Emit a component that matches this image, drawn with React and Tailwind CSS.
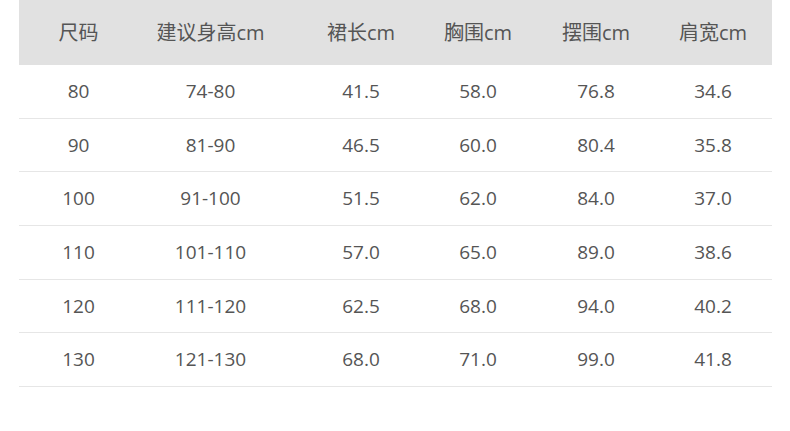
const headers = ["尺码", "建议身高cm", "裙长cm", "胸围cm", "摆围cm", "肩宽cm"];

const rows = [
  ["80", "74-80", "41.5", "58.0", "76.8", "34.6"],
  ["90", "81-90", "46.5", "60.0", "80.4", "35.8"],
  ["100", "91-100", "51.5", "62.0", "84.0", "37.0"],
  ["110", "101-110", "57.0", "65.0", "89.0", "38.6"],
  ["120", "111-120", "62.5", "68.0", "94.0", "40.2"],
  ["130", "121-130", "68.0", "71.0", "99.0", "41.8"],
];

const cols = "grid grid-cols-[119px_145px_156px_78px_158px_76px_1fr]";

export default function App() {
  return (
    <div
      className="w-[790px] h-[431px] bg-white overflow-hidden"
      style={{ fontFamily: '"Open Sans", "Noto Sans CJK SC", sans-serif' }}
    >
      <div className="ml-[19px] w-[753px] text-[19px] text-[#555]">
        {/* HEADER */}
        <div className={`${cols} h-[65px] items-center bg-[#e1e1e1] text-[20px]`}>
          {headers.map((h) => (
            <div key={h} className="text-center whitespace-nowrap">
              {h}
            </div>
          ))}
          <div />
        </div>

        {/* ROWS */}
        {rows.map((r) => (
          <div
            key={r[0]}
            className={`${cols} h-[53.67px] items-center border-b border-[#e6e6e6]`}
          >
            {r.map((v, i) => (
              <div key={i} className="text-center whitespace-nowrap">
                {v}
              </div>
            ))}
            <div />
          </div>
        ))}
      </div>
    </div>
  );
}
